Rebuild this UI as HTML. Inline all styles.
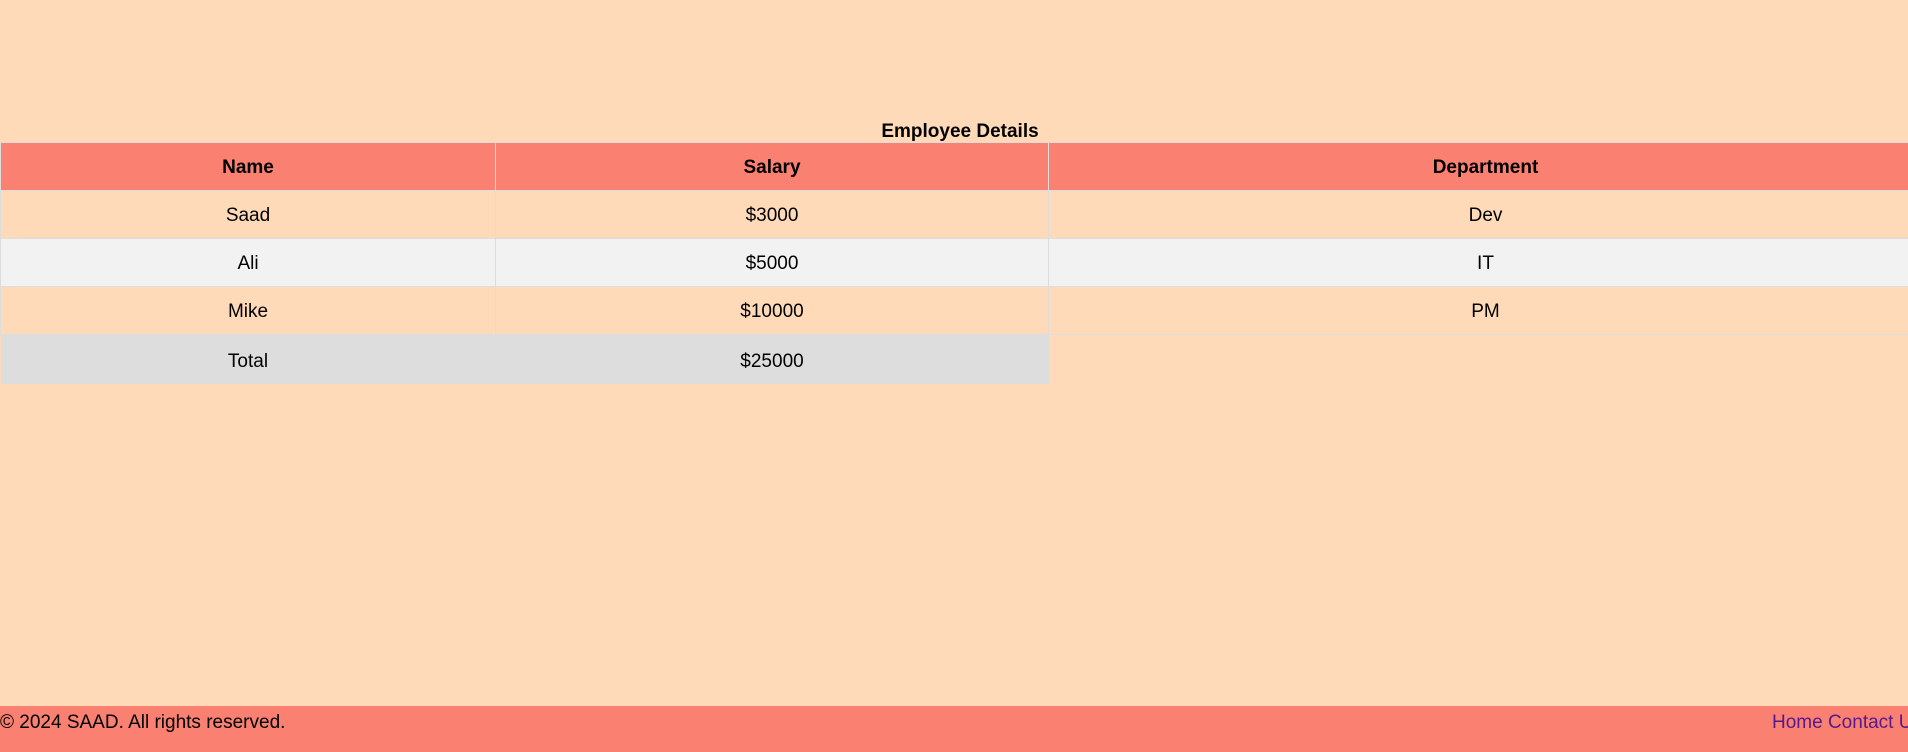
<!DOCTYPE html>
<html><head><meta charset="utf-8"><style>
html,body{margin:0;padding:0;width:1908px;height:752px;overflow:hidden;background:#FFDAB9;font-family:"Segoe UI","Liberation Sans",sans-serif;font-size:19px;color:#000;position:relative}
.cap{position:absolute;left:0;top:120px;width:1920px;text-align:center;font-weight:bold;font-size:19px;line-height:24px}
table{position:absolute;left:0;top:142px;width:1922px;border-collapse:collapse;table-layout:fixed}
td,th{border:1px solid #ddd;text-align:center;height:44px;padding:3px 0 0 0;line-height:22px}
th{background:#FA8072;font-weight:bold}
tr.e td{background:#f2f2f2}
tr.t td{background:#ddd;border:none;height:44px;padding-top:5px}
tr.t td.x{background:transparent}
footer{position:absolute;left:0;top:706px;width:1908px;height:46px;background:#FA8072}
footer .l{position:absolute;left:0;top:5px;line-height:24px}
footer .r{position:absolute;left:1772px;top:5px;line-height:24px;color:#551A8B;white-space:nowrap}
</style></head><body>
<div class="cap">Employee Details</div>
<table>
<colgroup><col style="width:495px"><col style="width:553px"><col style="width:874px"></colgroup>
<tr><th>Name</th><th>Salary</th><th>Department</th></tr>
<tr><td>Saad</td><td>$3000</td><td>Dev</td></tr>
<tr class="e"><td>Ali</td><td>$5000</td><td>IT</td></tr>
<tr><td>Mike</td><td>$10000</td><td>PM</td></tr>
<tr class="t"><td>Total</td><td>$25000</td><td class="x"></td></tr>
</table>
<footer><span class="l">© 2024 SAAD. All rights reserved.</span><span class="r">Home Contact Us</span></footer>
</body></html>
